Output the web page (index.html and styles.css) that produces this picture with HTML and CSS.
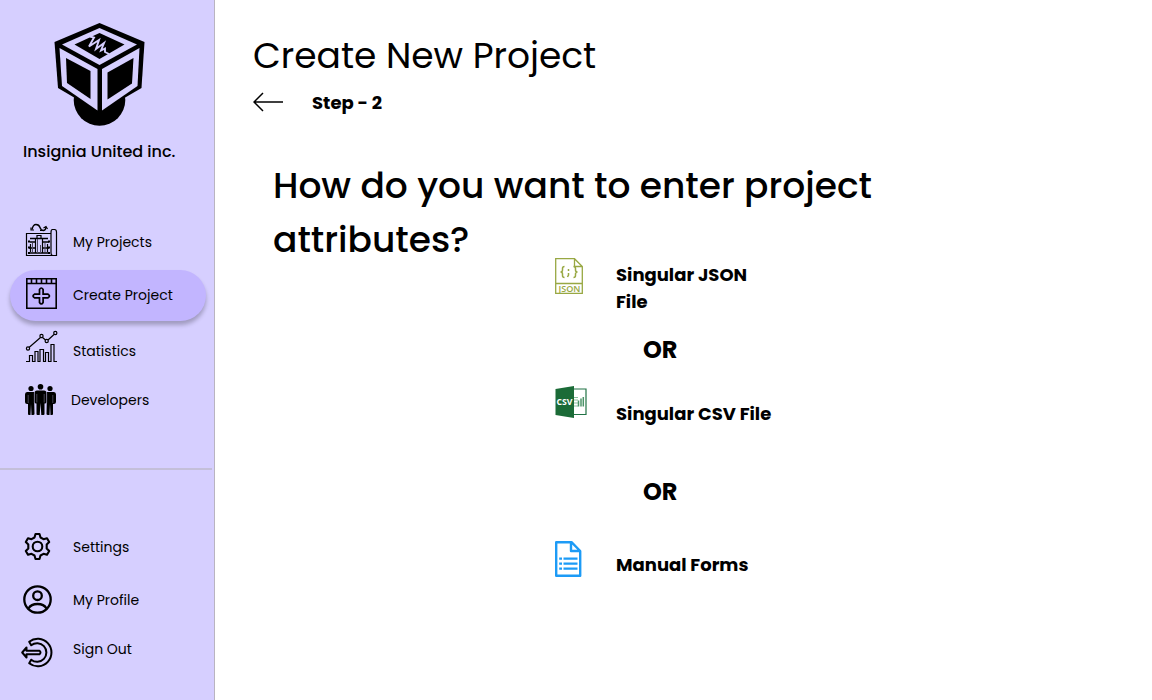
FILE: index.html
```html
<!DOCTYPE html>
<html lang="en">
<head>
<meta charset="utf-8">
<title>Create New Project</title>
<link rel="stylesheet" href="styles.css">
</head>
<body>
<div class="app">
  <aside class="sidebar">
    <div class="brand">
      <svg class="logo" viewBox="0 0 120 120" width="120" height="120">
        <circle cx="59.500" cy="85" r="25.800"/>
        <path d="M59.500 8 104.500 27 101.500 73 59.500 97.500 18 73 14.500 27Z"/>
        <g fill="#d6cfff">
          <path d="M59.500 13 97 29.500 59.500 50 22 29.500Z"/>
          <path d="M19.500 33 57.500 54V95.500L22 71Z"/>
          <path d="M99.500 33 62 54V95.500L97.500 71Z"/>
        </g>
        <path d="M59.500 18 84.500 29.500 59.500 44 34.500 29.500Z"/>
        <path d="M26 43 50.500 56V84L27 68Z"/>
        <path d="M93.500 43 67.500 57.500V84.500L92 68.500Z"/>
        <path d="M50 21.500 54 22.500 49 31.500 59 25 56 34 64 28 61 35.500 65 33.500 65 37 69 39" fill="none" stroke="#d6cfff" stroke-width="1.900"/>
      </svg>
      <div class="company">Insignia United inc.</div>
    </div>
    <nav class="menu">
      <a class="item projects">
        <svg class="icon" viewBox="0 0 40 40" fill="none" stroke="#000" stroke-width="1.200">
          <path d="M31 11.500H6.500V33.500H36M31 31V10.500Q31 7.500 32.500 7.500H34.500Q36.500 7.500 36.500 10V33.500H33Q31 33.500 31 31"/>
          <path d="M12 7.500Q13 2.500 16 2.500Q19 2.500 20 5.500T23.500 8.500Q26 8 26 5" stroke-width="1.400"/>
          <path d="M11 5.500V8H14M20 8.500H22.500M23.500 6 26 4.500 27.500 7"/>
          <path d="M10 16.500H28M10 20H15M23 20H29M9 26H15M23 26H29M9 31H29" stroke-width="1.500"/>
          <path d="M17 16V13.500H21V16M10.500 22V30M27.500 22V30M15.500 17V31M22.500 17V31"/>
          <path d="M17.500 17V31M20.500 23V31M12.500 21V30M25 21V30" stroke="#4d4961" stroke-width="1"/>
          <path d="M8 19.500H10M8 25.500H10M8 31H10M28 19.500H30M28 25.500H30M28 31H30" stroke-width="2"/>
        </svg><span>My Projects</span>
      </a>
      <a class="item active">
        <svg class="icon" viewBox="0 0 40 41" fill="none" stroke="#000" stroke-width="1.600">
          <path d="M6.800 3.800H36.200V33.200H6.800ZM6.800 8.500H36.200M11.500 4V8M16.500 4V8M21.500 4V8M26.500 4V8M31.500 4V8"/>
          <path d="M19.500 14.500Q21.300 11.500 23.100 14.500V19.200H28Q31 21 28 22.800H23.100V27.500Q21.300 30.500 19.500 27.500V22.800H14.500Q11.500 21 14.500 19.200H19.500Z" stroke-width="1.700"/>
        </svg><span>Create Project</span>
      </a>
      <a class="item statistics">
        <svg class="icon" viewBox="0 0 40 40" fill="none" stroke="#000" stroke-width="1.200">
          <path d="M6 31.500H9.500V25.500H12.500V31.500H15V21.500H18V31.500H20V19.500H23.500V31.500H25.500V22.500H28.500V31.500H31V14.500H34V31.500H37"/>
          <path d="M9 17.500 20.500 7.500M22.500 7.500 25.500 10M28 10 34 4.500"/>
          <circle cx="8" cy="18.500" r="1.600"/><circle cx="21.500" cy="6" r="1.600"/><circle cx="26.700" cy="11" r="1.600"/><circle cx="35.300" cy="3" r="1.600"/>
        </svg><span>Statistics</span>
      </a>
      <a class="item developers">
        <svg class="icon" viewBox="0 0 40 40">
          <circle cx="11" cy="8.500" r="2.600"/><circle cx="20.500" cy="6.700" r="2.800"/><circle cx="30" cy="8.500" r="2.600"/>
          <path d="M7 12H14L14.500 34Q14.500 35 13 35H11.500L11 24 10.500 35H9Q8 35 8 34V24Q5 24.500 5 22V14.500Q5 12 7 12Z"/>
          <path d="M34 12H27L26.500 34Q26.500 35 28 35H29.500L30 24 30.500 35H32Q33 35 33 34V24Q36 24.500 36 22V14.500Q36 12 34 12Z"/>
          <path d="M17 10.500H24Q26.500 10.500 26.500 13V22Q26.500 23.500 24.500 23.500V34Q24.500 35 23.500 35H21.300L20.500 23 19.700 35H17.500Q16.500 35 16.500 34V23.500Q14.500 23.500 14.500 22V13Q14.500 10.500 17 10.500Z"/>
          <path d="M8.200 15V23M32.800 15V23M16.800 14V22.500M24.200 14V22.500M14.300 12.500V23M26.700 12.500V23" stroke="#8f8aab" stroke-width=".5"/>
        </svg><span>Developers</span>
      </a>
    </nav>
    <div class="menu account">
      <a class="item">
        <svg class="icon" viewBox="0 0 40 40" fill="none" stroke="#000" stroke-width="2.100" stroke-linejoin="round">
          <path d="M15.500 7H19.500L20.500 10.500 23.500 12.200 27 11.200 29.200 15 26.700 17.500V21.500L29.200 24 27 27.800 23.500 26.800 20.500 28.500 19.500 32H15.500L14.500 28.500 11.500 26.800 8 27.800 5.800 24 8.300 21.500V17.500L5.800 15 8 11.200 11.500 12.200 14.500 10.500Z"/>
          <circle cx="17.500" cy="19.500" r="4.800"/>
        </svg><span>Settings</span>
      </a>
      <a class="item profile">
        <svg class="icon" viewBox="0 0 40 40" fill="none" stroke="#000" stroke-width="2.300">
          <circle cx="17.500" cy="19.500" r="13.200"/><circle cx="17.500" cy="15.700" r="4.300"/><path d="M8.500 28.500Q11 24 17.500 24T26.500 28.500"/>
        </svg><span>My Profile</span>
      </a>
      <a class="item signout">
        <svg class="icon" viewBox="0 0 40 40" fill="none" stroke="#000" stroke-width="2" stroke-linejoin="round">
          <path d="M9.200 12.800A13.700 13.700 0 1 1 9.200 34.200L11.200 30.700A9.300 9.300 0 1 0 11.200 16.300Z"/>
          <path d="M6.500 18.500 2.200 23.500 6.500 28.500V25.200H19.500Q21.500 23.500 19.500 21.800H6.500Z" fill="#d6cfff"/>
        </svg><span>Sign Out</span>
      </a>
    </div>
  </aside>
  <main class="content">
    <h1 class="title">Create New Project</h1>
    <div class="step">
      <svg viewBox="0 0 32 20" width="32" height="20" fill="none" stroke="#000" stroke-width="1.500"><path d="M30 10H1M10 1 1 10 10 19"/></svg>
      <span>Step - 2</span>
    </div>
    <h2 class="question">How do you want to enter project<br>attributes?</h2>
    <div class="options">
      <div class="option json">
        <svg viewBox="0 0 36 40" width="36" height="40" fill="none" stroke="#98a843" stroke-width="1.300">
          <path d="M1.700 1.700H20.500L28.300 9.500V36.300H1.700ZM20.500 1.700V9.500H28.300M1.700 26.500H28.300"/>
          <path d="M10.500 9.500Q8.500 9.500 8.500 11.500V13Q8.500 15 6.500 15Q8.500 15 8.500 17V18.500Q8.500 20.500 10.500 20.500M19.500 9.500Q21.500 9.500 21.500 11.500V13Q21.500 15 23.500 15Q21.500 15 21.500 17V18.500Q21.500 20.500 19.500 20.500M14.500 12V14M14.500 16V18L13.500 20" stroke-width="1.500"/>
          <text class="json-label" x="4.500" y="34.500" textLength="22" lengthAdjust="spacingAndGlyphs">JSON</text>
        </svg>
        <span>Singular JSON<br>File</span>
      </div>
      <div class="or">OR</div>
      <div class="option csv">
        <svg viewBox="0 0 36 34" width="36" height="34">
          <path d="M19 4H32V29.500H19" fill="#fff" stroke="#207245" stroke-width="1.200"/>
          <path d="M1.500 4 20 1V33L1.500 30Z" fill="#1b6b37"/>
          <path d="M20 12.500H24M20 15H24M20 18H24M20 21H24" stroke="#8abf9d"/>
          <path d="M24.500 15.500V21.500M27 13.500V21.500M29.300 12V21.500" stroke="#4c9468" stroke-width="1.500"/>
          <text class="csv-label" x="2.500" y="19.500" textLength="16" lengthAdjust="spacingAndGlyphs">CSV</text>
        </svg>
        <span>Singular CSV File</span>
      </div>
      <div class="or">OR</div>
      <div class="option forms">
        <svg viewBox="0 0 36 38" width="36" height="38" fill="none" stroke="#1d9bf6" stroke-width="2.400" stroke-linejoin="round">
          <path d="M2.200 2.200H17.500L26.200 11V35.800H2.200ZM17 2.500V11H26"/>
          <path d="M9.500 18.700H23.500M9.500 23.700H23.500M9.500 28.700H23.500M5.200 18.700H8M5.200 23.700H8M5.200 28.700H8" stroke-width="2.300"/>
        </svg>
        <span>Manual Forms</span>
      </div>
    </div>
  </main>
</div>
</body>
</html>
```
FILE: styles.css
```css
body { margin: 0; background: #fff; color: #000; font-family: Poppins, Inter, sans-serif; }
.app { display: flex; height: 700px; overflow: hidden; }
.sidebar { width: 214px; flex: none; background: #d6cfff; border-right: 1px solid #b9b4c0; }
.brand { height: 215px; padding: 15px 0 0 40px; box-sizing: border-box; }
.logo { display: block; }
.company { margin: 7px 0 0 -17px; font-size: 16px; font-weight: 500; line-height: 20px; white-space: nowrap; }
.menu { display: flex; flex-direction: column; height: 255px; padding-top: 7px; box-sizing: border-box; border-bottom: 2px solid #c4bfd9; margin-right: 2px; }
.item { display: flex; align-items: center; height: 40px; padding-left: 20px; font-size: 14px; white-space: nowrap; }
.item span { margin-left: 13px; }
.icon { width: 40px; height: 40px; flex: none; }
.projects { margin-bottom: 8px; }
.active { width: 196px; height: 51px; box-sizing: border-box; padding-left: 10px; margin-left: 10px; border-radius: 26px; background: #c2b5ff; box-shadow: 0 4px 4px rgba(0,0,0,.25); }
.active .icon { height: 41px; }
.statistics { margin-top: 9px; }
.statistics span { padding-top: 2px; }
.developers { margin-top: 10px; }
.developers span { margin-left: 11px; }
.account { height: 220px; border: 0; padding-top: 57px; }
.profile { margin-top: 13px; }
.signout { margin-top: 9px; }
.content { flex: 1; padding: 29px 0 0 38px; }
.title { margin: 0; font-size: 36px; font-weight: 400; line-height: 54px; white-space: nowrap; }
.step { display: flex; align-items: center; height: 38px; font-size: 18px; font-weight: 700; gap: 27px; }
.question { margin: 38px 0 0 20px; font-size: 36px; font-weight: 500; line-height: 54px; white-space: nowrap; }
.options { width: 260px; margin-left: 301px; margin-top: -10px; }
.option { display: flex; font-size: 18px; font-weight: 700; line-height: 27px; white-space: nowrap; }
.option span { margin-left: 26px; }
.option svg { flex: none; }
.json { height: 75px; }
.json span { margin-top: 4px; }
.json-label { font: 600 8.5px "Open Sans", sans-serif; fill: #98a843; stroke: none; }
.or { height: 36px; margin-left: 89px; font-size: 24px; font-weight: 700; line-height: 36px; }
.csv { height: 89px; padding-top: 17px; box-sizing: content-box; }
.csv span { margin-top: 15px; }
.csv-label { font: 700 9.5px "Open Sans", sans-serif; fill: #fff; }
.forms { padding-top: 30px; }
.forms span { margin-top: 11px; }
```
